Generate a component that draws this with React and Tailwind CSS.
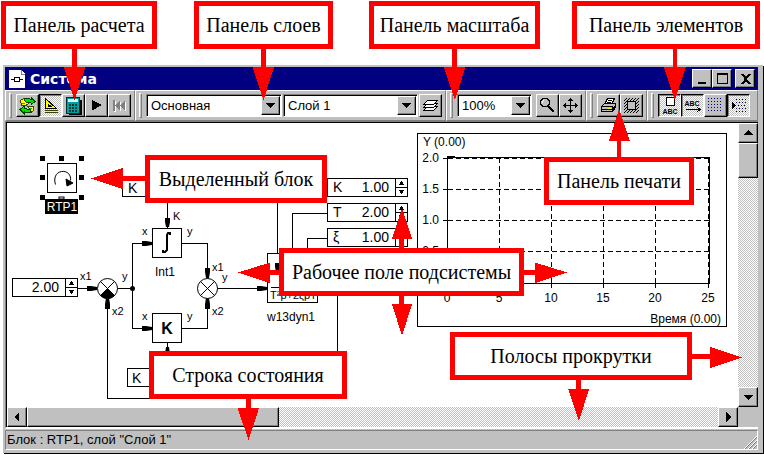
import React from "react";

const raised =
  "border border-t-white border-l-white border-r-black border-b-black bg-[#c0c0c0] shadow-[inset_-1px_-1px_0_#808080]";
const dither =
  "bg-[repeating-conic-gradient(#c0c0c0_0_25%,#ffffff_0_50%)] bg-[length:2px_2px]";
const pressed =
  "border border-t-black border-l-black border-r-white border-b-white shadow-[inset_1px_1px_0_#808080] " + dither;

function Icon({ children, size = 19 }) {
  return (
    <svg width={size} height={size} viewBox={`0 0 ${size} ${size}`} shapeRendering="crispEdges" fill="none" aria-hidden="true">
      {children}
    </svg>
  );
}

function ToolButton({ label, on, children }) {
  return (
    <button
      type="button"
      aria-label={label}
      aria-pressed={on}
      className={`flex h-[23px] w-[23px] shrink-0 items-center justify-center ${on ? pressed : raised}`}
    >
      {children}
    </button>
  );
}

function Group({ children, className = "" }) {
  return (
    <div className={`flex items-center border-t border-r border-b border-l border-t-white border-r-[#808080] border-b-[#808080] border-l-white pr-[3px] pl-[3px] ${className}`}>
      <div className="mr-1 h-[25px] w-[3px] shrink-0 border border-t-white border-r-[#808080] border-b-[#808080] border-l-white" />
      {children}
    </div>
  );
}

function Combo({ label, value, className }) {
  return (
    <div className={`flex h-[23px] shrink-0 border border-t-[#808080] border-r-white border-b-white border-l-[#808080] bg-white shadow-[inset_1px_1px_0_#000] ${className}`}>
      <select aria-label={label} className="min-w-0 flex-1 appearance-none bg-transparent pl-1 text-[13px] leading-5 outline-none">
        <option>{value}</option>
      </select>
      <span className={`my-px mr-px flex w-[19px] items-center justify-center ${raised}`}>
        <svg width="9" height="5" shapeRendering="crispEdges" aria-hidden="true">
          <path d="M0 0h9L4.500 5z" />
        </svg>
      </span>
    </div>
  );
}

function ScrollButton({ label, d, className = "" }) {
  return (
    <button type="button" aria-label={label} className={`flex h-5 w-5 shrink-0 items-center justify-center ${raised} ${className}`}>
      <svg width="10" height="10" viewBox="0 0 10 10" shapeRendering="crispEdges" aria-hidden="true">
        <path d={d} />
      </svg>
    </button>
  );
}

function WindowButton({ label, d, className = "" }) {
  return (
    <button type="button" aria-label={label} className={`flex h-[19px] w-5 items-center justify-center ${raised} ${className}`}>
      <svg width="12" height="12" viewBox="0 0 12 12" shapeRendering="crispEdges" aria-hidden="true">
        <path d={d} fillRule="evenodd" />
      </svg>
    </button>
  );
}

function ValueBox({ id, name, value, className }) {
  return (
    <div className={`absolute flex h-[19px] border border-black bg-white ${className}`}>
      {name && (
        <label htmlFor={id} className="w-5 pl-[5px] text-sm leading-[17px]">
          {name}
        </label>
      )}
      <input id={id} aria-label={name ? undefined : "Константа"} defaultValue={value} className="min-w-0 flex-1 bg-transparent pr-[6px] text-right text-sm leading-[17px] outline-none" />
      <div className="flex w-3 flex-col border-l border-black">
        <button type="button" aria-label="Больше" className="flex flex-1 items-center justify-center border-b border-black">
          <svg width="5" height="4" shapeRendering="crispEdges"><path d="M0 4h5L3 0H2z" /></svg>
        </button>
        <button type="button" aria-label="Меньше" className="flex flex-1 items-center justify-center">
          <svg width="5" height="4" shapeRendering="crispEdges"><path d="M0 0h5L3 4H2z" /></svg>
        </button>
      </div>
    </div>
  );
}

const handles = [[40, 156], [59, 156], [79, 156], [40, 175], [79, 175], [40, 195], [79, 195]];

const portLabels = [
  ["K", 173, 220], ["x", 142, 235], ["y", 187, 235], ["x1", 80, 280], ["y", 122, 280],
  ["x2", 112, 315], ["x", 142, 320], ["y", 187, 320], ["x1", 212, 271], ["y", 222, 281], ["x2", 212, 315],
];

const axisTicks = [[0, 447], [5, 499], [10, 551], [15, 603], [20, 655], [25, 708]];

function Diagram() {
  return (
    <svg className="block" width="730" height="284" viewBox="7 123 730 284" fontFamily="'Liberation Sans', Arial, sans-serif" fontSize="14">
      <g fill="none" stroke="#000" shapeRendering="crispEdges">
        <path d="M167.500 185v43M77 288.500h20M117 288.500h15M132.500 243v85M132 243.500h20M132 328.500h20M182 243.500h25.500v35M182 328.500h25.500v-30M217 288.500h50M107.500 298v100.500h230v-110h-20M167.500 343v35M277.500 187v66M327 213.500h-34.500v40M327 238.500h-19.500v16M122 187.500h205" />
        <g fill="#fff">
          <path d="M122.500 178.500h80v18h-80zM127.500 368.500h80v18h-80z" />
          <path d="M47.500 163.500h29v29h-29zM152.500 228.500h29v29h-29zM152.500 313.500h29v29h-29zM267.500 253.500h50v49h-50z" />
        </g>
      </g>
      <g fill="#000">
        <path d="M165 218h5v4l-1 5h-3l-1-5zM165 359h5v-5l-1-7h-3l-1 7zM142 241h4l6 1v3l-6 1h-4zM142 326h4l6 1v3l-6 1h-4zM87 286h4l6 1v3l-6 1h-4zM257 286h4l6 1v3l-6 1h-4zM205 268h5v4l-1 6h-3l-1-6zM205 309h5v-5l-1-6h-3l-1 6zM105 309h5v-5l-1-6h-3l-1 6zM275 263h5v4l-1 5h-3l-1-5z" />
        <circle cx="132.500" cy="288.500" r="2.500" />
      </g>
      <g fill="#fff" stroke="#000">
        <circle cx="107.500" cy="288.500" r="10" />
        <circle cx="207.500" cy="288.500" r="10" />
        <path d="M100.500 281.500l14 14M114.500 281.500l-14 14M200.500 281.500l14 14M214.500 281.500l-14 14" />
        <path d="M107.500 288.500l7 7q-7 6-14 0z" fill="#000" />
      </g>
      {handles.map(([x, y]) => (
        <rect key={`${x}-${y}`} x={x} y={y} width="5" height="5" />
      ))}
      <path d="M55.500 184.500c-2-6 0-12 6-13 6-1 10 4 9 9" fill="none" stroke="#000" />
      <path d="M66 179l7 4-6 3z" stroke="#000" />
      <rect x="45" y="199" width="33" height="15" />
      <rect x="59" y="197" width="5" height="2" fill="#fff" stroke="#000" />
      <text x="62" y="211" textAnchor="middle" fill="#fff" fontSize="12">RTP1</text>
      <path d="M163 250v2h2l2-2v-15l1-2h2v2" fill="none" stroke="#000" strokeWidth="2" />
      <text x="167" y="334" textAnchor="middle" fontSize="16" fontWeight="bold">K</text>
      <text x="128" y="193">K</text>
      <text x="132" y="383">K</text>
      <text x="165" y="276" textAnchor="middle" fontSize="12">Int1</text>
      <text x="291" y="321" textAnchor="middle" fontSize="12">w13dyn1</text>
      <path d="M271 287.500h44" stroke="#000" />
      <text x="270" y="299" fontSize="11">T²p+2ξpT</text>
      <g fontSize="11">
        {portLabels.map(([t, x, y]) => (
          <text key={`${x}-${y}`} x={x} y={y}>{t}</text>
        ))}
      </g>
      <g fill="none" stroke="#000" shapeRendering="crispEdges">
        <path d="M417.500 133.500h309v193h-309z" />
        <path d="M447.500 157v126.500h262v-126zM443 158.500h4M443 189.500h4M443 220.500h4M443 251.500h4M447.500 283v5M499.500 283v5M551.500 283v5M603.500 283v5M655.500 283v5M708.500 283v5" />
        <path strokeDasharray="5 3" d="M448 158.500h261M448 189.500h261M448 220.500h261M448 251.500h261M499.500 158v125M551.500 158v125M603.500 158v125M655.500 158v125M708.500 158v125" />
      </g>
      <g fontSize="12">
        <text x="423" y="146">Y (0.00)</text>
        <text x="721" y="323" textAnchor="end">Время (0.00)</text>
        {["2.0", "1.5", "1.0", "0.5"].map((t, i) => (
          <text key={t} x="439" y={162 + i * 31} textAnchor="end">{t}</text>
        ))}
        {axisTicks.map(([n, x]) => (
          <text key={n} x={x} y="302" textAnchor="middle">{n}</text>
        ))}
      </g>
    </svg>
  );
}

function Callout({ children, className }) {
  return (
    <div className={`absolute flex h-12 items-center justify-center border-[5px] border-[#ff0000] bg-white font-['Liberation_Serif','Times_New_Roman',serif] text-xl whitespace-nowrap ${className}`}>
      {children}
    </div>
  );
}

export default function App() {
  return (
    <div className="relative overflow-hidden bg-white pt-[65px] pr-px pb-px pl-[3px] font-['Liberation_Sans',Arial,sans-serif] text-black">
      <main className="border-t-2 border-r-[5px] border-b-[3px] border-l-2 border-[#c0c0c0] bg-[#c0c0c0] shadow-[1px_1px_0_#000,inset_0_-1px_0_#808080]">
        <header className="flex h-[23px] items-center bg-[#000080] pr-[3px] pl-1 text-white">
          <svg width="16" height="18" viewBox="0 0 16 18" shapeRendering="crispEdges" aria-hidden="true">
            <path d="M0 0h12l4 4v14H0z" fill="#fff" />
            <path d="M12 0v4h4" stroke="#808080" fill="none" />
            <path d="M2 9.500h3M11 9.500h3M5.500 7.500h5v4h-5z" stroke="#000" fill="none" />
          </svg>
          <h1 className="ml-[5px] flex-1 font-['DejaVu_Sans',Verdana,sans-serif] text-sm leading-5 font-bold">Система</h1>
          <WindowButton label="Свернуть" d="M2 9h8v2H2z" />
          <WindowButton label="Развернуть" d="M1 0h11v11H1zM2 2v8h9V2z" className="mr-[3px]" />
          <WindowButton label="Закрыть" d="M1 1h3l2.500 2.500L9 1h3L8 5v2l4 4H9L6.500 8.500 4 11H1l4-4V5z" />
        </header>

        <div className="flex h-[31px]">
          <Group>
            <ToolButton label="Обновить">
              <Icon>
                <path d="M6 2.500h5l2 1V1.500l4 4-4 3.500V7l-3-1H7z" fill="#00e000" stroke="#004000" />
                <path d="M13 16.500H8l-2-1v2l-4-4L6 10v2l3 1h3z" fill="#00e000" stroke="#004000" />
                <path d="M2.500 4.500l3-2 2 3 3 2-2 1.500H3.500zM9.500 10.500h6v4l-2 2-1-3z" fill="#ffff00" stroke="#404000" />
                <path d="M4 7l3 0M12 12h2" stroke="#00c000" />
              </Icon>
            </ToolButton>
            <ToolButton label="Редактирование" on>
              <Icon>
                <path d="M4.500 2.500v10h11zM7.500 8.500v2h3z" fill="#ffff00" stroke="#000" fillRule="evenodd" />
                <path d="M4 14.500h13v2H4z" fill="#ffff00" />
                <path d="M4 14.500h13M4 16.500h13" stroke="#404000" />
              </Icon>
            </ToolButton>
            <ToolButton label="Расчет">
              <Icon>
                <path d="M4.500 3.500h13v15h-13z" fill="#000" />
                <path d="M2.500 1.500h13v16h-13z" fill="#00a0a0" stroke="#003030" />
                <path d="M4 3h10v3H4z" fill="#d0ffff" />
                <path d="M5 9h9M5 12h9M5 15h9" stroke="#003838" strokeWidth="2" strokeDasharray="2 1" />
              </Icon>
            </ToolButton>
            <ToolButton label="Пуск">
              <Icon><path d="M5 4v10h1l9-5z" fill="#000" /></Icon>
            </ToolButton>
            <ToolButton label="В начало">
              <Icon>
                <path d="M4 5h2v11H4zM11 5v11l-5-5zM16 5v11l-5-5z" fill="#fff" />
                <path d="M3 4h2v11H3zM10 4v11l-5-5zM15 4v11l-5-5z" fill="#808080" />
              </Icon>
            </ToolButton>
          </Group>
          <Group>
            <Combo label="Режим" value="Основная" className="mr-px w-[136px]" />
            <Combo label="Слой" value="Слой 1" className="mr-px w-[135px]" />
            <ToolButton label="Слои">
              <Icon>
                <g fill="#fff" stroke="#000">
                  <path d="M2.500 14.500l4-4h10l-4 4z" />
                  <path d="M2.500 11.500l4-4h10l-4 4z" />
                  <path d="M2.500 8.500l4-4h10l-4 4z" />
                </g>
              </Icon>
            </ToolButton>
          </Group>
          <Group>
            <Combo label="Масштаб" value="100%" className="mr-1 w-[75px]" />
            <ToolButton label="Лупа">
              <Icon>
                <path d="M5 2.500h4l2.500 2.500v3l-2.500 2.500H5L2.500 8V5z" fill="#c0c0c0" stroke="#000" />
                <path d="M4.500 7V5.500L6 4.500" stroke="#fff" />
                <path d="M10 10l6 6" stroke="#000" strokeWidth="2" />
              </Icon>
            </ToolButton>
            <ToolButton label="Показать все">
              <Icon>
                <path d="M9.500 3v13M3 9.500h13" stroke="#000" />
                <path d="M9 2h1l2 3H7zM9 17h1l2-3H7zM2 9v1l3 2V7zM17 9v1l-3 2V7z" fill="#000" />
              </Icon>
            </ToolButton>
          </Group>
          <Group>
            <ToolButton label="Печать">
              <Icon>
                <path d="M5.500 8.500l3-6h7l-3 6z" fill="#fff" stroke="#000" />
                <path d="M9 4.500h4M8 6.500h4" stroke="#000" />
                <path d="M2.500 10.500l3-3h11v4l-3 4h-11z" fill="#c0c0c0" stroke="#000" />
                <path d="M2.500 10.500h11v5h-11z" fill="#c0c0c0" stroke="#000" />
                <path d="M3 13.500h10M14 13l2-3" stroke="#000" />
                <path d="M9 12h3v1H9z" fill="#ffff00" />
              </Icon>
            </ToolButton>
            <ToolButton label="Поля страницы">
              <Icon>
                <path d="M2 5l3-3M2 8l6-6M2 11l9-9M2 14l12-12M2 17L17 2M5 17L17 5M8 17l9-9M11 17l6-6M14 17l3-3" stroke="#000" />
                <path d="M5.500 5.500h8v8h-8z" fill="#c0c0c0" stroke="#000" />
              </Icon>
            </ToolButton>
          </Group>
          <Group className="flex-1">
            <ToolButton label="Подписи блоков" on>
              <Icon>
                <path d="M6.500 1.500h8v8h-8z" fill="#fff" stroke="#000" />
                <text x="10" y="18" textAnchor="middle" fontSize="7" fontWeight="bold" fill="#000">ABC</text>
              </Icon>
            </ToolButton>
            <ToolButton label="Подписи линий" on>
              <Icon>
                <text x="9" y="10" textAnchor="middle" fontSize="7" fontWeight="bold" fill="#000">ABC</text>
                <path d="M3 13.500h14M14 11l3 2.500-3 2.500" stroke="#000" />
              </Icon>
            </ToolButton>
            <ToolButton label="Сетка">
              <Icon>
                <path d="M2 2.500h14M2 5.500h14M2 8.500h14M2 11.500h14M2 14.500h14" stroke="#000080" strokeDasharray="1 2" />
              </Icon>
            </ToolButton>
            <ToolButton label="Привязка" on>
              <Icon>
                <path d="M7 3.500h11M7 6.500h11M9 9.500h9M7 12.500h11M7 15.500h11" stroke="#000080" strokeDasharray="1 2" />
                <path d="M3 6v7l4-3.500z" fill="#000" />
              </Icon>
            </ToolButton>
          </Group>
        </div>

        <section className="flex border-t border-r-0 border-b-2 border-l border-t-[#808080] border-b-white border-l-[#808080]">
          <div className="min-w-0 flex-1 border-t border-l border-black bg-white">
            <div className="relative overflow-hidden">
              <Diagram />
              <ValueBox id="c" value="2.00" className="top-[155px] left-[5px] w-[66px]" />
              <ValueBox id="k" name="K" value="1.00" className="top-[55px] left-[320px] w-[81px]" />
              <ValueBox id="t" name="T" value="2.00" className="top-[80px] left-[320px] w-[81px]" />
              <ValueBox id="xi" name="ξ" value="1.00" className="top-[105px] left-[320px] w-[81px]" />
            </div>
            <div className={`flex h-5 ${dither}`}>
              <ScrollButton label="Влево" d="M7 0v10L2 5z" />
              <div className={`w-[252px] ${raised}`} />
              <div className="flex-1" />
              <ScrollButton label="Вправо" d="M3 0v10l5-5z" />
            </div>
          </div>
          <div className="flex w-5 flex-col border-t border-black bg-[#c0c0c0]">
            <div className={`flex flex-1 flex-col ${dither}`}>
              <ScrollButton label="Вверх" d="M0 7h10L5 2z" />
              <div className={`h-[35px] ${raised}`} />
              <div className="flex-1" />
              <ScrollButton label="Вниз" d="M0 3h10L5 8z" />
            </div>
            <div className="h-5" />
          </div>
        </section>

        <footer className="mt-px flex h-5 items-center border border-t-[#808080] border-r-white border-b-white border-l-[#808080] pl-px text-[13px] leading-4">
          <span className="flex-1">Блок : RTP1, слой "Слой 1"</span>
          <svg width="14" height="14" viewBox="0 0 14 14" className="self-end" aria-hidden="true">
            <path d="M1 14L14 1M5 14l9-9M9 14l5-5" stroke="#fff" />
            <path d="M2 14L14 2M6 14l8-8M10 14l4-4" stroke="#808080" />
          </svg>
        </footer>
      </main>

      <Callout className="top-px left-px w-[156px]">Панель расчета</Callout>
      <Callout className="top-px left-[194px] w-[139px]">Панель слоев</Callout>
      <Callout className="top-px left-[369px] w-[171px]">Панель масштаба</Callout>
      <Callout className="top-px left-[572px] w-[188px]">Панель элементов</Callout>
      <Callout className="top-[155px] left-[145px] w-[182px]">Выделенный блок</Callout>
      <Callout className="top-[248px] left-[279px] w-[245px]">Рабочее поле подсистемы</Callout>
      <Callout className="top-[157px] left-[544px] w-[150px]">Панель печати</Callout>
      <Callout className="top-[351px] left-[149px] w-[198px]">Строка состояния</Callout>
      <Callout className="top-[332px] left-[450px] w-[242px]">Полосы прокрутки</Callout>

      <svg className="pointer-events-none absolute top-0 left-0" width="764" height="455" viewBox="0 0 764 455" fill="#ff0000" shapeRendering="crispEdges" aria-hidden="true">
        <path d="M72 49h5v18h8.500l-11 33-10.500-33h8zM261 49h5v18h8l-10.500 33-11-33h8.500zM452 49h5v18h8.500l-10.500 33-11-33h8zM673 49h4v18h9l-11 33-11-33h9z" />
        <path d="M145 176v5h-22v8l-32-10.500 32-10.500v8z" />
        <path d="M279 270v5h-9v8l-32-10.500 32-10v7.500zM524 270v5h11v8l32-10.500-32-10v7.500zM399 248h5v-9h8l-10-31-10 31h7zM399 296h5v8h8l-10 32-10-32h7z" />
        <path d="M617 157h4v-16h9l-11-32-10 32h8zM246 399h5v9h8l-10.500 32-11-32h8.500zM692 354v5h18v9l32-10.500-32-10.500v7zM576 380h5v9h8l-10 32-11-32h8z" />
      </svg>
    </div>
  );
}
